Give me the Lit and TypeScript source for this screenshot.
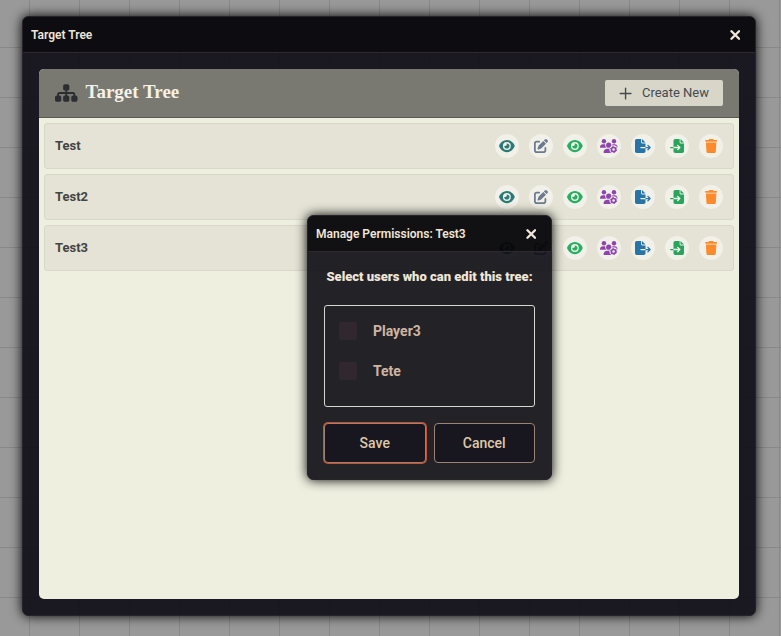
import { LitElement, html, css, svg, TemplateResult, SVGTemplateResult } from "lit";
import { customElement, property } from "lit/decorators.js";

interface Glyph {
  width: number;
  body: SVGTemplateResult;
}

const EYE = svg`<path d="M288 32c-80.8 0-145.5 36.8-192.6 80.6C48.6 156 17.3 208 2.5 243.7c-3.3 7.9-3.3 16.7 0 24.6C17.3 304 48.6 356 95.4 399.4C142.5 443.2 207.2 480 288 480s145.5-36.8 192.6-80.6c46.8-43.5 78.1-95.4 93-131.1c3.3-7.9 3.3-16.7 0-24.6c-14.9-35.7-46.2-87.7-93-131.1C433.5 68.8 368.8 32 288 32zM144 256a144 144 0 1 1 288 0 144 144 0 1 1 -288 0zm144-64c0 35.3-28.7 64-64 64c-7.1 0-13.9-1.2-20.3-3.3c-5.5-1.8-11.9 1.6-11.7 7.4c.3 6.9 1.3 13.8 3.2 20.7c13.7 51.2 66.4 81.6 117.6 67.9s81.6-66.4 67.9-117.6c-11.1-41.5-47.8-69.4-88.6-71.1c-5.8-.2-9.2 6.1-7.4 11.7c2.1 6.4 3.3 13.2 3.3 20.3z"/>`;

const GLYPHS: Record<string, Glyph> = {
  eye: { width: 576, body: EYE },
  edit: {
    width: 512,
    body: svg`<path d="M471.6 21.7c-21.9-21.9-57.3-21.9-79.2 0L362.3 51.7l97.9 97.9 30.1-30.1c21.9-21.9 21.9-57.3 0-79.2L471.6 21.7zm-299.2 220c-6.1 6.1-10.8 13.6-13.5 21.9l-29.6 88.8c-2.9 8.6-.6 18.1 5.8 24.6s15.9 8.7 24.6 5.8l88.8-29.6c8.2-2.7 15.7-7.4 21.9-13.5L437.7 172.3 339.7 74.3 172.4 241.7zM96 64C43 64 0 107 0 160V416c0 53 43 96 96 96H352c53 0 96-43 96-96V320c0-17.7-14.3-32-32-32s-32 14.3-32 32v96c0 17.7-14.3 32-32 32H96c-17.7 0-32-14.3-32-32V160c0-17.7 14.3-32 32-32h96c17.7 0 32-14.3 32-32s-14.3-32-32-32H96z"/>`,
  },
  users: {
    width: 640,
    body: svg`<circle cx="144" cy="80" r="80"/><circle cx="512" cy="80" r="80"/>
      <path d="M0 298.7C0 310.4 9.6 320 21.3 320H235.4c-26.6-23.5-43.3-57.8-43.3-96c0-7.6 .7-15 1.9-22.3c-13.6-6.3-28.7-9.7-44.6-9.7H106.7C47.8 192 0 239.8 0 298.7z"/>
      <path d="M405 320H618.7c11.7 0 21.3-9.6 21.3-21.3C640 239.8 592.2 192 533.3 192H490.600c-15.900 0-31 3.500-44.600 9.700c1.300 7.200 1.900 14.700 1.900 22.300c0 38.200-16.800 72.500-43.300 96z"/>
      <circle cx="320" cy="224" r="96"/>
      <path d="M261.3 352C187.700 352 128 411.700 128 485.300c0 14.700 11.900 26.700 26.700 26.700H480V352z"/>
      <circle class="gap" cx="496" cy="384" r="152"/>
      <circle class="ring" cx="496" cy="384" r="76" stroke-width="56"/>
      <circle class="ring" cx="496" cy="384" r="114" stroke-width="36" stroke-dasharray="62 57.400"/>`,
  },
  fileExport: {
    width: 576,
    body: svg`<path d="M0 64C0 28.7 28.7 0 64 0H224V128c0 17.7 14.3 32 32 32H384V288H216c-13.3 0-24 10.7-24 24s10.7 24 24 24H384V448c0 35.3-28.7 64-64 64H64c-35.3 0-64-28.7-64-64V64zM384 336V288H494.1l-39-39c-9.4-9.4-9.4-24.6 0-33.9s24.6-9.4 33.9 0l80 80c9.4 9.4 9.4 24.6 0 33.9l-80 80c-9.4 9.4-24.6 9.4-33.9 0s-9.4-24.6 0-33.9l39-39H384zm0-208H256V0L384 128z"/>`,
  },
  fileImport: {
    width: 512,
    body: svg`<path d="M128 64c0-35.3 28.7-64 64-64H352V128c0 17.7 14.3 32 32 32H512V448c0 35.3-28.7 64-64 64H192c-35.3 0-64-28.7-64-64V336H302.1l-39 39c-9.4 9.4-9.4 24.6 0 33.9s24.6 9.4 33.9 0l80-80c9.4-9.4 9.4-24.6 0-33.9l-80-80c-9.4-9.4-24.6-9.4-33.9 0s-9.4 24.6 0 33.9l39 39H128V64zm0 224v48H24c-13.3 0-24-10.7-24-24s10.7-24 24-24H128zM512 128H384V0L512 128z"/>`,
  },
  trash: {
    width: 448,
    body: svg`<path d="M135.2 17.7L128 32H32C14.3 32 0 46.3 0 64S14.3 96 32 96H416c17.7 0 32-14.3 32-32s-14.3-32-32-32H320l-7.2-14.3C307.4 6.800 296.3 0 284.2 0H163.8c-12.1 0-23.2 6.800-28.6 17.7zM416 128H32L53.2 467c1.6 25.3 22.6 45 47.9 45H346.9c25.3 0 46.3-19.7 47.9-45L416 128z"/>`,
  },
  sitemap: {
    width: 576,
    body: svg`<path d="M208 80c0-26.5 21.5-48 48-48h64c26.5 0 48 21.5 48 48v64c0 26.5-21.5 48-48 48h-8v40H464c30.9 0 56 25.1 56 56v32h8c26.5 0 48 21.5 48 48v64c0 26.5-21.5 48-48 48H464c-26.5 0-48-21.5-48-48V368c0-26.5 21.5-48 48-48h8V288c0-4.4-3.6-8-8-8H312v40h8c26.5 0 48 21.5 48 48v64c0 26.5-21.5 48-48 48H256c-26.5 0-48-21.5-48-48V368c0-26.5 21.5-48 48-48h8V280H112c-4.4 0-8 3.6-8 8v32h8c26.5 0 48 21.5 48 48v64c0 26.5-21.5 48-48 48H48c-26.5 0-48-21.5-48-48V368c0-26.5 21.5-48 48-48h8V288c0-30.9 25.1-56 56-56H264V192h-8c-26.5 0-48-21.5-48-48V80z"/>`,
  },
  plus: {
    width: 448,
    body: svg`<path d="M248 72c0-13.3-10.700-24-24-24s-24 10.700-24 24V232H40c-13.300 0-24 10.700-24 24s10.700 24 24 24H200V440c0 13.300 10.700 24 24 24s24-10.700 24-24V280H408c13.300 0 24-10.700 24-24s-10.700-24-24-24H248V72z"/>`,
  },
  close: {
    width: 384,
    body: svg`<path class="cross" d="M54 118L330 394M330 118L54 394"/>`,
  },
};

@customElement("tree-icon")
export class TreeIcon extends LitElement {
  @property() name = "eye";

  static styles = css`
    :host {
      display: inline-flex;
      height: 14px;
    }
    svg {
      display: block;
      height: 100%;
      fill: currentColor;
    }
    .gap {
      fill: #f1f0e9;
    }
    .ring {
      fill: none;
      stroke: currentColor;
    }
    .cross {
      fill: none;
      stroke: currentColor;
      stroke-width: 88;
      stroke-linecap: round;
    }
  `;

  render(): TemplateResult {
    const glyph = GLYPHS[this.name];
    return html`<svg viewBox="0 0 ${glyph.width} 512" aria-hidden="true">${glyph.body}</svg>`;
  }
}

const ACTIONS = [
  { icon: "eye", tone: "teal", label: "View" },
  { icon: "edit", tone: "slate", label: "Edit" },
  { icon: "eye", tone: "green", label: "Show to players" },
  { icon: "users", tone: "purple", label: "Permissions" },
  { icon: "fileExport", tone: "blue", label: "Export" },
  { icon: "fileImport", tone: "emerald", label: "Import" },
  { icon: "trash", tone: "orange", label: "Delete" },
];

@customElement("app-root")
export class AppRoot extends LitElement {
  private trees = ["Test", "Test2", "Test3"];
  private players = ["Player3", "Tete"];

  static styles = css`
    :host {
      display: flex;
      position: relative;
      box-sizing: border-box;
      min-height: 100vh;
      padding: 16px 25px 20px 22px;
      overflow: hidden;
      font-family: Roboto, "Liberation Sans", sans-serif;
      font-size: 14px;
      line-height: 20px;
      background-color: #999;
      background-image: linear-gradient(to right, #888 1px, transparent 1px),
        linear-gradient(to bottom, #888 1px, transparent 1px);
      background-size: 50px 50px;
      background-position: 29px 47px;
    }
    * {
      box-sizing: border-box;
    }
    h1,
    h2,
    ul,
    p {
      margin: 0;
      padding: 0;
    }
    button {
      font: inherit;
      cursor: pointer;
    }
    .window {
      display: flex;
      flex-direction: column;
      border: 1px solid #28232b;
      border-radius: 6px;
      background: rgba(12, 10, 20, 0.9);
      box-shadow: 0 0 12px #000;
    }
    .main {
      flex: 1;
    }
    .bar {
      display: flex;
      align-items: center;
      justify-content: space-between;
      height: 36px;
      padding: 0 8px;
      border-bottom: 1px solid #30282f;
      border-radius: 5px 5px 0 0;
      background: rgba(0, 0, 0, 0.5);
      color: #efe6d8;
    }
    .bar h1,
    .bar h2 {
      font-size: 12px;
      font-weight: 600;
      line-height: 20px;
      white-space: nowrap;
    }
    .close {
      display: flex;
      align-items: center;
      justify-content: center;
      width: 24px;
      height: 24px;
      padding: 0;
      border: 0;
      background: none;
      color: inherit;
    }
    .panel {
      flex: 1;
      margin: 16px;
      overflow: hidden;
      border-radius: 5px;
      background: #eeefdf;
    }
    .heading {
      display: flex;
      align-items: center;
      height: 49px;
      padding: 0 16px;
      border-bottom: 1px solid #5c574f;
      background: #7a7971;
    }
    .heading tree-icon {
      height: 20px;
      color: #2b2d30;
    }
    .heading h2 {
      flex: 1;
      margin-left: 8px;
      padding-bottom: 2px;
      color: #f5f1e8;
      font-family: "Liberation Serif", serif;
      font-size: 19px;
      font-weight: 700;
      line-height: 24px;
    }
    .create {
      display: flex;
      align-items: center;
      gap: 10px;
      height: 26px;
      padding: 0 14px;
      border: 0;
      border-radius: 2px;
      background: #d8d6c8;
      color: #444b50;
      font-size: 13px;
    }
    .heading .create tree-icon {
      height: 15px;
      color: inherit;
    }
    .list {
      display: flex;
      flex-direction: column;
      gap: 5px;
      padding: 5px;
      list-style: none;
    }
    .row {
      display: flex;
      align-items: center;
      justify-content: space-between;
      height: 46px;
      padding: 0 10px;
      border: 1px solid #d8d7c8;
      border-radius: 3px;
      background: #e4e3d5;
      color: #444;
      font-size: 13px;
      font-weight: 700;
    }
    .actions {
      display: flex;
      gap: 10px;
    }
    .action {
      display: flex;
      align-items: center;
      justify-content: center;
      width: 24px;
      height: 24px;
      padding: 0;
      border: 0;
      border-radius: 50%;
      background: #f1f0e9;
    }
    .teal { color: #2b7a78; }
    .slate { color: #6b7a90; }
    .green { color: #27ae60; }
    .purple { color: #8e44ad; }
    .blue { color: #2874a6; }
    .emerald { color: #28a45c; }
    .orange { color: #fd8a2b; }
    .dialog {
      position: absolute;
      top: 215px;
      left: 307px;
      width: 245px;
      background: rgba(12, 11, 19, 0.9);
    }
    .form {
      display: flex;
      flex-direction: column;
      gap: 16px;
      padding: 16px;
    }
    .prompt {
      padding-bottom: 3px;
      color: #efe6d8;
      font-size: 13px;
      font-weight: 900;
      line-height: 18px;
      text-align: center;
      white-space: nowrap;
    }
    .users {
      display: flex;
      flex-direction: column;
      gap: 20px;
      height: 102px;
      margin: 0;
      padding: 15px 14px;
      border: 1px solid #d8d6d0;
      border-radius: 3px;
    }
    .user {
      display: flex;
      align-items: center;
      gap: 16px;
      height: 20px;
      color: #cfb5a2;
      font-weight: 700;
    }
    .tick {
      appearance: none;
      width: 18px;
      height: 18px;
      margin: 0;
      border-radius: 2px;
      background: #30272f;
    }
    .buttons {
      display: grid;
      grid-template-columns: 1fr 1fr;
      gap: 8px;
    }
    .choice {
      height: 40px;
      padding: 0;
      border: 1px solid #9c8273;
      border-radius: 4px;
      background: #18161f;
      color: #dfc9a9;
      font-weight: 500;
    }
    .primary {
      box-shadow: 0 0 0 1px #c8502f;
    }
  `;

  private renderTree(name: string): TemplateResult {
    return html`<li class="row">
      <span>${name}</span>
      <div class="actions">
        ${ACTIONS.map(
          (a) => html`<button class="action ${a.tone}" type="button" aria-label="${a.label} ${name}">
            <tree-icon name=${a.icon}></tree-icon>
          </button>`
        )}
      </div>
    </li>`;
  }

  render(): TemplateResult {
    return html`
      <main class="window main">
        <header class="bar">
          <h1>Target Tree</h1>
          <button class="close" type="button" aria-label="Close window">
            <tree-icon name="close"></tree-icon>
          </button>
        </header>
        <section class="panel">
          <div class="heading">
            <tree-icon name="sitemap"></tree-icon>
            <h2>Target Tree</h2>
            <button class="create" type="button"><tree-icon name="plus"></tree-icon>Create New</button>
          </div>
          <ul class="list">
            ${this.trees.map((t) => this.renderTree(t))}
          </ul>
        </section>
      </main>
      <div class="window dialog" role="dialog" aria-labelledby="dialog-title">
        <header class="bar">
          <h2 id="dialog-title">Manage Permissions: Test3</h2>
          <button class="close" type="button" aria-label="Close dialog">
            <tree-icon name="close"></tree-icon>
          </button>
        </header>
        <form class="form">
          <p class="prompt" id="prompt">Select users who can edit this tree:</p>
          <div class="users" role="group" aria-labelledby="prompt">
            ${this.players.map(
              (p) => html`<label class="user"><input class="tick" type="checkbox" name=${p} />${p}</label>`
            )}
          </div>
          <div class="buttons">
            <button class="choice primary" type="button">Save</button>
            <button class="choice" type="button">Cancel</button>
          </div>
        </form>
      </div>
    `;
  }
}
